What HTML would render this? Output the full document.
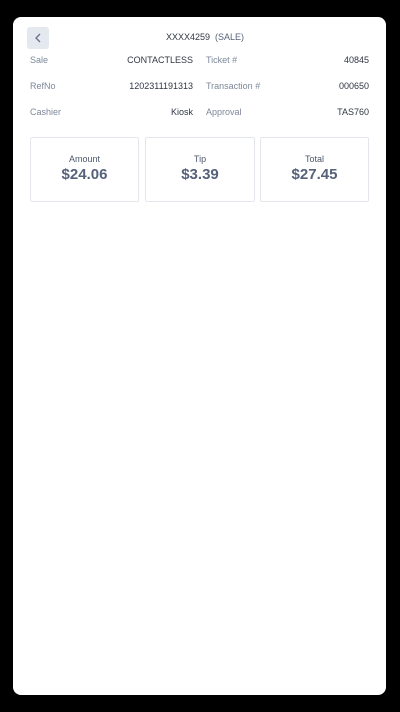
<!DOCTYPE html>
<html><head><style>
*{margin:0;padding:0;box-sizing:border-box}
body{width:400px;height:712px;background:#000;font-family:"Liberation Sans",sans-serif;position:relative;overflow:hidden}
.panel{position:absolute;left:13px;top:17px;width:373px;height:678px;background:#fff;border-radius:8px}
.back{position:absolute;left:27px;top:27px;width:22px;height:22px;background:#e4e8ef;border-radius:3px}
.t{position:absolute;font-size:9px;white-space:nowrap}
.lab{color:#7d879a}
.val{color:#2f3643;text-align:right}
.card{position:absolute;top:137px;height:65px;border:1px solid #e3e6eb;border-radius:2px;text-align:center}
.card .h{font-size:9px;color:#4e586b;margin-top:16px}
.card .v{font-size:15px;color:#56617a;margin-top:2px;font-weight:bold}
</style></head><body>
<div class="panel"></div>
<div class="back"><svg width="22" height="22"><path d="M13 7 L9 11 L13 15" stroke="#66708a" stroke-width="1.3" fill="none"/></svg></div>
<div class="t" style="left:166px;top:32px;color:#2f3643">XXXX4259 &nbsp;<span style="color:#56617a">(SALE)</span></div>
<div class="t lab" style="left:30px;top:55px">Sale</div>
<div class="t val" style="right:207px;top:55px">CONTACTLESS</div>
<div class="t lab" style="left:206px;top:55px">Ticket #</div>
<div class="t val" style="right:31px;top:55px">40845</div>
<div class="t lab" style="left:30px;top:81px">RefNo</div>
<div class="t val" style="right:207px;top:81px">1202311191313</div>
<div class="t lab" style="left:206px;top:81px">Transaction #</div>
<div class="t val" style="right:31px;top:81px">000650</div>
<div class="t lab" style="left:30px;top:107px">Cashier</div>
<div class="t val" style="right:207px;top:107px">Kiosk</div>
<div class="t lab" style="left:206px;top:107px">Approval</div>
<div class="t val" style="right:31px;top:107px">TAS760</div>
<div class="card" style="left:30px;width:109px"><div class="h">Amount</div><div class="v">$24.06</div></div>
<div class="card" style="left:145px;width:110px"><div class="h">Tip</div><div class="v">$3.39</div></div>
<div class="card" style="left:260px;width:109px"><div class="h">Total</div><div class="v">$27.45</div></div>
</body></html>
